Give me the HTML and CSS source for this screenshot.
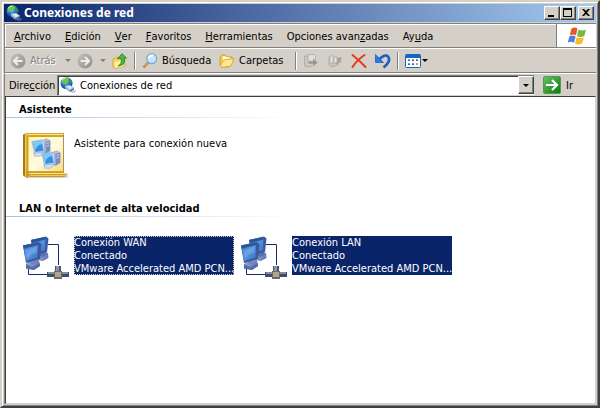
FILE: index.html
```html
<!DOCTYPE html>
<html lang="es">
<head>
<meta charset="utf-8">
<title>Conexiones de red</title>
<link rel="stylesheet" href="styles.css">
</head>
<body>
<svg class="defs" aria-hidden="true">
  <defs>
    <radialGradient id="globe" cx=".4" cy=".3" r=".75"><stop offset="0" stop-color="#9fe0ff"/><stop offset=".45" stop-color="#2b7fd8"/><stop offset="1" stop-color="#0a2f86"/></radialGradient>
    <linearGradient id="grey" x2="1" y2="1"><stop offset="0" stop-color="#c4c2bc"/><stop offset="1" stop-color="#8f8d88"/></linearGradient>
    <linearGradient id="green" x2="1" y2="1"><stop offset="0" stop-color="#6cc06a"/><stop offset="1" stop-color="#087a10"/></linearGradient>
    <linearGradient id="screen" x2="1" y2="1"><stop offset="0" stop-color="#2f68b8"/><stop offset=".5" stop-color="#5593dc"/><stop offset="1" stop-color="#3a6fc6"/></linearGradient>
    <linearGradient id="stand" x2="1" y2="0"><stop offset="0" stop-color="#93a5d6"/><stop offset="1" stop-color="#6378b4"/></linearGradient>
    <linearGradient id="gold" x2="1" y2="0"><stop offset="0" stop-color="#a87a10"/><stop offset=".4" stop-color="#f4d45a"/><stop offset="1" stop-color="#c08e12"/></linearGradient>
    <linearGradient id="page" x2="1" y2="1"><stop offset="0" stop-color="#fff3a8"/><stop offset=".55" stop-color="#fffbe0"/><stop offset="1" stop-color="#f8dc78"/></linearGradient>
    <symbol id="network" viewBox="0 0 16 16">
      <circle cx="6.500" cy="6.300" r="6" fill="url(#globe)"/>
      <path d="M2 2.500Q5-.4 8.500.7L9.300 3 7.500 4.500 8 6.300 5.500 8 4.300 6.300 1.500 6Z" fill="#6ec44b"/>
      <path d="M9 2.500 12 4 12.300 7 10 6Z" fill="#2d9b46"/>
      <path d="M2.200 3.200Q4 .8 6.300 1" stroke="#d6f5d5" fill="none"/>
      <path d="M5 9 10 8 14 11 9.500 13Z" fill="#dce9f6" stroke="#7e9cc6" stroke-width=".6"/>
      <path d="M5 9 9.500 13V15L5 11Z" fill="#9db8da"/>
      <path d="M9.500 13 14 11V13L9.500 15Z" fill="#5779ae"/>
      <path d="M11 14.500Q15 16 15.300 13.300" fill="none" stroke="#7c96b8"/>
    </symbol>
    <symbol id="monitors" viewBox="0 0 48 48">
      <path d="M26 13.500H36.500V34M6.500 33V43.500H25" fill="none" stroke="#17286c"/>
      <path d="M13 25 20 20 26 22 26.500 27 21 30 14 29Z" fill="url(#stand)"/>
      <path d="M18 19H24V24L20 26 17 24Z" fill="#5a70ae"/>
      <path d="M9 9 24 5.500 26.500 7.500 25 21 12 24Z" fill="#3d589a"/>
      <path d="M9 9 23.500 6 23 19.500 11.500 22Z" fill="url(#screen)"/>
      <path d="M9 9 23.500 6V8.500L10 12Z" fill="#2c5597"/>
      <path d="M4 33 10 28 17 29.500 18 35 12 39 4 37.500Z" fill="url(#stand)"/>
      <path d="M4 33 10 36 18 32V35L12 39 4 37.500Z" fill="#566ca9"/>
      <path d="M8 27 15 25V31L11 34 8 32Z" fill="#7188c3"/>
      <path d="M1 14.500 16.500 11 19.500 13 18 28 4 32Z" fill="#3d589a"/>
      <path d="M1 14.500 16 11.500 15.500 26.500 4 30Z" fill="url(#screen)"/>
      <path d="M1 14.500 16 11.500V14L2 17.500Z" fill="#2c5597"/>
      <path d="M3 19 15 16 14.500 22Q8 22 5 28Z" fill="#83b6ef" opacity=".45"/>
      <path d="M33 35H39V41H33Z" fill="#4b5970"/>
      <path d="M34 35H37V41H34Z" fill="#8795ac"/>
      <path d="M25 41H47V46H25Z" fill="#3f4c68"/>
      <path d="M26 41H46V43H26Z" fill="#7f8da6"/>
      <path d="M32 40H40V48H32Z" fill="#6b6c5e"/>
      <path d="M33 41H39V46H33Z" fill="#aaa68c"/>
    </symbol>
    <symbol id="pc" viewBox="0 0 22 22">
      <path d="M12 3 17 1 21 3V14L16 17 11 14Z" fill="#b5bfdd" stroke="#8d99bf" stroke-width=".7"/>
      <path d="M16 4V17L21 14V3Z" fill="#7d8cba"/>
      <path d="M17 6 20 5M17 9 20 8" stroke="#dce4f5"/>
      <path d="M3 16 10 14 15 17 10 20 4 20Z" fill="#d9e0ed" stroke="#9aa6c4" stroke-width=".7"/>
      <path d="M1 4 12 2 15 5 14 15 4 17Z" fill="#cfdcf2" stroke="#86a0cc" stroke-width=".7"/>
      <path d="M2 4.500 12 3 13.500 14 5 15.500Z" fill="#2f92e2"/>
      <path d="M2 4.500 12 3 12.500 7Q7 7 5 13Z" fill="#79cdfb"/>
    </symbol>
  </defs>
</svg>
<div class="window">
  <header class="titlebar">
    <svg class="icon"><use href="#network"/></svg>
    <h1>Conexiones de red</h1>
    <div class="controls">
      <button type="button" aria-label="Minimizar"><svg viewBox="0 0 12 10"><path d="M2 7H8V9H2Z"/></svg></button>
      <button type="button" aria-label="Maximizar"><svg viewBox="0 0 12 10"><path fill-rule="evenodd" d="M1 0H10V9H1ZM2 2V8H9V2Z"/></svg></button>
      <button type="button" class="close" aria-label="Cerrar"><svg viewBox="0 0 12 10"><path d="M2 1H4L6 3 8 1H10L7 4.500 10 8H8L6 6 4 8H2L5 4.500Z"/></svg></button>
    </div>
  </header>

  <div class="menurow">
    <nav class="menu" aria-label="Menú">
      <button type="button"><u>A</u>rchivo</button>
      <button type="button"><u>E</u>dición</button>
      <button type="button"><u>V</u>er</button>
      <button type="button"><u>F</u>avoritos</button>
      <button type="button"><u>H</u>erramientas</button>
      <button type="button">Opciones avan<u>z</u>adas</button>
      <button type="button">Ay<u>u</u>da</button>
    </nav>
    <div class="flag">
      <svg viewBox="0 0 20 18">
        <path d="M4.500 1.500Q8-.5 10.500 1.800L9 8.300Q6 6.600 2.700 8.300Z" fill="#e8572b"/>
        <path d="M11.500 2.500Q15 4.500 19 2.500L17.300 9Q13.500 11 10 9Z" fill="#79b93a"/>
        <path d="M2.400 9.300Q5.500 7.800 8.700 9.500L7 15.800Q4 14 .7 15.700Z" fill="#4a83dc"/>
        <path d="M9.700 10.200Q13 12 17 10.200L15.300 16.300Q11.500 18.500 8 16.600Z" fill="#f8bd28"/>
      </svg>
    </div>
  </div>

  <div class="toolbar" role="toolbar" aria-label="Botones estándar">
    <button type="button" class="back" disabled>
      <svg class="icon" viewBox="0 0 16 16"><circle cx="8" cy="8" r="7.500" fill="url(#grey)"/><path d="M12.500 8H4.500M8 4 4 8 8 12" fill="none" stroke="#f0eee9" stroke-width="2"/></svg>
      <span>Atrás</span>
    </button>
    <button type="button" class="drop" aria-label="Historial atrás" disabled></button>
    <button type="button" aria-label="Adelante" disabled>
      <svg class="icon" viewBox="0 0 16 16"><circle cx="8" cy="8" r="7.500" fill="url(#grey)"/><path d="M3.500 8H11.500M8 4 12 8 8 12" fill="none" stroke="#f0eee9" stroke-width="2"/></svg>
    </button>
    <button type="button" class="drop" aria-label="Historial adelante" disabled></button>
    <button type="button" aria-label="Arriba">
      <svg class="icon" viewBox="0 0 16 16"><path d="M1 6 5 4 6 6 12 5 13 13 3 15.500 1 14Z" fill="#f3d157" stroke="#c9a136" stroke-width=".7"/><path d="M2 9 12 7 11 13.500 3 15Z" fill="#fff09b"/><path d="M6 13Q10.500 11 9 5.500H5.500L10 .7 14.500 5H12.500Q14 12 6 13Z" fill="#4cba38" stroke="#1c7f22" stroke-width=".8"/></svg>
    </button>
    <span class="separator"></span>
    <button type="button" class="search">
      <svg class="icon" viewBox="0 0 16 16"><path d="M1.500 14.500 6.500 9" stroke="#b87935" stroke-width="2.500"/><path d="M2 13.500 6 9" stroke="#efc274"/><circle cx="9.700" cy="5.700" r="5" fill="#c3e6fc" stroke="#79a7d5" stroke-width="1.200"/><path d="M6.700 5Q8 2 11 2.500" stroke="#fff" stroke-width="2" fill="none"/></svg>
      <span>Búsqueda</span>
    </button>
    <button type="button" class="folders">
      <svg class="icon" viewBox="0 0 16 16"><path d="M1 4 3 2H6L8 4H13V7L10 14H3L1 12Z" fill="#f5cb59" stroke="#c49220" stroke-width=".8"/><path d="M4 3 12 5V8H4Z" fill="#fff9cf"/><path d="M1.500 12 5 7 15 5.500 12 13 3 14.500Z" fill="#ffe98b" stroke="#d1a02b" stroke-width=".8"/></svg>
      <span>Carpetas</span>
    </button>
    <span class="separator"></span>
    <div class="edit">
      <button type="button" aria-label="Mover a" disabled><svg class="icon" viewBox="0 0 16 16"><path d="M1.500 13V3H5L6 5H12V12L5 14Z" fill="#c9c6c0" stroke="#aaa8a2" stroke-width=".8"/><path d="M5 1.500H11L12.500 3V8H5Z" fill="#e2e0db" stroke="#aaa8a2" stroke-width=".8"/><path d="M5 8H10V5L15 9.500 10 14V11H5Z" fill="#989690" stroke="#d8d5ce" stroke-width=".6"/></svg></button>
      <button type="button" aria-label="Copiar a" disabled><svg class="icon" viewBox="0 0 16 16"><path d="M2 12V4H6L8 5H13L11 12 4 14Z" fill="#c9c6c0" stroke="#aaa8a2" stroke-width=".8"/><path d="M3 3H7V10H3ZM6 4H10V12H6Z" fill="#e8e6e1" stroke="#aaa8a1" stroke-width=".8"/><path d="M6 9Q10 11 11.500 7L9 6 14.500 4 13.500 10 12.500 9Q9 13 6 9Z" fill="#a3a19b"/></svg></button>
      <button type="button" aria-label="Eliminar"><svg class="icon" viewBox="0 0 16 16"><path d="M1.500 2Q9 8 14.500 14M13.500 2Q6 7 1.500 14" fill="none" stroke="#e53c18" stroke-width="2" stroke-linecap="round"/></svg></button>
      <button type="button" aria-label="Deshacer"><svg class="icon" viewBox="0 0 16 16"><path d="M4 6.500Q10 .5 13 3.500 16.500 8 8.500 14.500" fill="none" stroke="#1d5fc4" stroke-width="2.700"/><path d="M.5 1.500V9.500H8.500Z" fill="#287bde" stroke="#1d5fc4" stroke-width=".8"/></svg></button>
    </div>
    <span class="separator"></span>
    <button type="button" class="views" aria-label="Vistas">
      <svg class="icon" viewBox="0 0 16 16"><rect x=".5" y="1.500" width="15" height="13" rx="1" fill="#fff" stroke="#1c63bd"/><path d="M1 1H15V5H1Z" fill="#1764c4"/><path d="M3 6H5V7H3ZM7 6H9V7H7ZM11 6H13V7H11ZM3 10H5V11H3Z" fill="#6fa9b4"/><path d="M3 7H5V8H3ZM7 7H9V8H7ZM11 7H13V8H11ZM7 11H9V12H7ZM3 11H5V12H3Z" fill="#2b67b4"/><path d="M7 10H9V11H7Z" fill="#d36c3e"/><path d="M11 10H13V12H11Z" fill="#d5a230"/></svg>
      <i class="arrow"></i>
    </button>
  </div>

  <form class="address">
    <label for="address">Dire<u>c</u>ción</label>
    <div class="combo">
      <svg class="icon"><use href="#network"/></svg>
      <input id="address" type="text" value="Conexiones de red">
      <button type="button" aria-label="Desplegar"><i class="arrow"></i></button>
    </div>
    <button type="button" class="go">
      <svg viewBox="0 0 18 18"><rect x=".5" y=".5" width="17" height="17" rx="1.500" fill="url(#green)" stroke="#4ca04c"/><path d="M3 9H13.500M9 4 14 9 9 14" fill="none" stroke="#fff" stroke-width="2.200"/></svg>
      <span>Ir</span>
    </button>
  </form>

  <main class="content">
    <section>
      <h2>Asistente</h2>
      <div class="items">
        <a class="item" href="#">
          <svg class="large" viewBox="0 0 48 48">
            <path d="M4 44H43L46 41V46H6Z" fill="#8e8b82" opacity=".35"/>
            <path d="M1 3 3 1H6V46H4L1 43Z" fill="url(#gold)"/>
            <path d="M1 3V43L3 45V2Z" fill="#a87a14"/>
            <path d="M4 39H42V42L45 41 43 45H8L4 44Z" fill="#c99b22"/>
            <path d="M7 41.500H43" stroke="#ffe785"/><path d="M8 43.500H43" stroke="#f1ca52"/>
            <path d="M6 1.500H41.500V39.500H6Z" fill="url(#page)" stroke="#d3a632"/>
            <path d="M5 1H42V5H5Z" fill="#d4a32a"/><path d="M5 2.500H41" stroke="#ffe887"/>
            <path d="M41.500 3V40" stroke="#a8925c"/>
            <use href="#pc" x="9" y="6" width="20" height="20"/>
            <use href="#pc" x="19" y="18" width="20" height="20"/>
          </svg>
          <span class="caption"><span>Asistente para conexión nueva</span></span>
        </a>
      </div>
    </section>
    <section>
      <h2>LAN o Internet de alta velocidad</h2>
      <div class="items">
        <a class="item selected focused" href="#">
          <svg class="large"><use href="#monitors"/></svg>
          <span class="caption"><span>Conexión WAN</span><span>Conectado</span><span>VMware Accelerated AMD PCN...</span></span>
        </a>
        <a class="item selected" href="#">
          <svg class="large"><use href="#monitors"/></svg>
          <span class="caption"><span>Conexión LAN</span><span>Conectado</span><span>VMware Accelerated AMD PCN...</span></span>
        </a>
      </div>
    </section>
  </main>
</div>
</body>
</html>
```
FILE: styles.css
```css
* { box-sizing: border-box; }

body {
  margin: 0;
  background: #d4d0c8;
  color: #000;
  font: 11px/13px Tahoma, "DejaVu Sans Condensed", "DejaVu Sans", sans-serif;
}

.defs { position: absolute; width: 0; height: 0; }

button, input { font: inherit; color: inherit; }
button { display: flex; align-items: center; margin: 0; padding: 0; border: 0; background: none; white-space: nowrap; }
svg { display: block; flex: none; }
u { text-underline-offset: 1px; }

.icon { width: 16px; height: 16px; }

.window {
  display: flex;
  flex-direction: column;
  min-height: 100vh;
  padding: 2px;
  background: #d4d0c8;
  border: 2px solid;
  border-color: #d4d0c8 #404040 #404040 #d4d0c8;
  box-shadow: inset 1px 1px #fff, inset -1px -1px #808080;
}

.titlebar {
  display: flex;
  align-items: center;
  height: 18px;
  padding: 0 2px;
  gap: 2px;
  background: linear-gradient(90deg, #0a246a, #a6caf0);
}
.titlebar h1 { flex: 1; margin: 0; color: #fff; font: bold 12px/16px "Noto Sans", sans-serif; }

.controls { display: flex; }
.controls button, .combo button {
  width: 16px;
  height: 14px;
  justify-content: center;
  background: #d4d0c8;
  border: 1px solid;
  border-color: #fff #404040 #404040 #fff;
  box-shadow: inset -1px -1px #808080;
}
.controls svg { width: 12px; height: 10px; }
.controls .close { margin-left: 2px; }

.menurow {
  display: flex;
  height: 25px;
  margin-top: 1px;
  border: 1px solid #808080;
  border-width: 1px 0 1px 1px;
  box-shadow: inset 1px 1px #fff, 0 1px #fff;
}
.menu { display: flex; flex: 1; align-items: center; gap: 14px; padding: 2px 0 0 9px; }
.flag {
  display: flex;
  align-items: center;
  justify-content: center;
  width: 40px;
  background: #fff;
  border-left: 1px solid #808080;
}
.flag svg { width: 20px; height: 18px; }

.toolbar {
  display: flex;
  align-items: center;
  height: 25px;
  padding: 1px 0 0 5px;
  border-bottom: 1px solid #808080;
  border-left: 1px solid #808080;
}
.toolbar button:disabled { color: #808080; text-shadow: 1px 1px #fff; }
.back { width: 48px; gap: 4px; }
.toolbar .drop { width: 19px; justify-content: center; }
.drop::before, .arrow {
  content: "";
  border: 3px solid transparent;
  border-top-color: currentColor;
  border-bottom: 0;
}
.separator { width: 2px; height: 18px; margin: 0 6px; border-left: 1px solid #808080; border-right: 1px solid #fff; }
.toolbar .search { width: 77px; gap: 4px; }
.toolbar .folders { width: 70px; gap: 4px; }
.edit { display: flex; gap: 8px; }
.views { gap: 1px; }

.address {
  display: flex;
  align-items: center;
  height: 23px;
  padding: 1px 0 1px 4px;
  margin: 0;
  border-left: 1px solid #808080;
  border-top: 1px solid #fff;
}
.address label { width: 48px; }
.combo {
  display: flex;
  flex: 1;
  align-items: center;
  height: 21px;
  min-width: 0;
  padding-left: 2px;
  gap: 4px;
  background: #fff;
  border: 1px solid;
  border-color: #808080 #d4d0c8 #d4d0c8 #808080;
  box-shadow: inset 1px 1px #404040;
}
.combo input { flex: 1; min-width: 0; height: 17px; padding: 1px 0 0; border: 0; outline: 0; background: none; }
.combo button { height: 18px; }
.go { width: 61px; padding-left: 8px; }
.address .go { gap: 5px; }
.go svg { width: 18px; height: 18px; }

.content {
  flex: 1;
  background: #fff;
  border: 1px solid;
  border-color: #404040 #d4d0c8 #d4d0c8 #404040;
  box-shadow: -1px 0 #808080;
  margin-left: 1px;
}
.content section { height: 99px; }
.content h2 {
  margin: 0;
  padding: 6px 0 2px 13px;
  font: bold 11px/13px Tahoma, "DejaVu Sans Condensed", "DejaVu Sans", sans-serif;
  background: linear-gradient(90deg, #a5c3e5, #fff) 0 100% / 290px 1px no-repeat;
}
.items { display: flex; padding: 14px 0 0 16px; }
.item { display: flex; width: 218px; gap: 4px; color: #000; text-decoration: none; }
.large { width: 48px; height: 48px; }
.caption { display: flex; flex-direction: column; align-self: flex-start; width: 160px; margin-top: 5px; white-space: nowrap; }
.selected .caption { background: #0a246a; color: #fff; }
.focused .caption { outline: 1px dotted #d4d0c8; outline-offset: -1px; }
```
